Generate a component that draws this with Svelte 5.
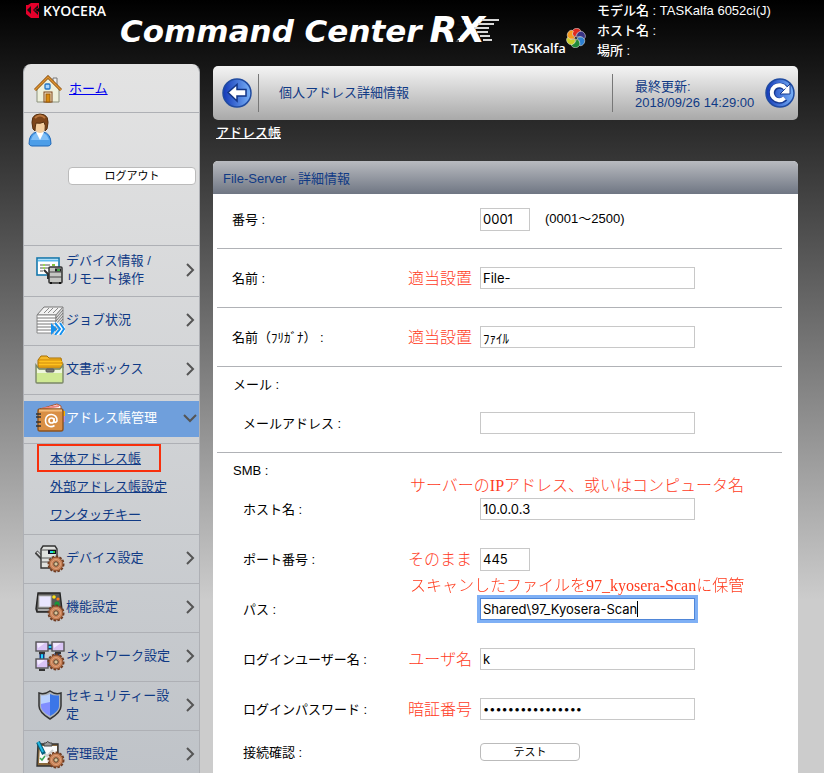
<script>
  import { onMount } from 'svelte';

  const menuTop = [
    { icon: 'status', label: 'デバイス情報 /\nリモート操作' },
    { icon: 'job', label: 'ジョブ状況' },
    { icon: 'box', label: '文書ボックス' },
    { icon: 'book', label: 'アドレス帳管理', active: true }
  ];
  const submenu = ['本体アドレス帳', '外部アドレス帳設定', 'ワンタッチキー'];
  const menuBottom = [
    { icon: 'device', label: 'デバイス設定' },
    { icon: 'panel', label: '機能設定' },
    { icon: 'network', label: 'ネットワーク設定' },
    { icon: 'shield', label: 'セキュリティー設定' },
    { icon: 'admin', label: '管理設定' }
  ];
  const petals = ['#e02a20', '#3a3385', '#2c7fd0', '#1f8a38', '#c9cf2a', '#f69a1e'];
  const streaks = [0, 1, 2, 3, 4, 5];

  let pathInput;
  onMount(() => {
    pathInput.focus();
    pathInput.setSelectionRange(99, 99);
  });
</script>

{#snippet gear()}
  <circle cx="21" cy="21" r="7" fill="none" stroke="#6d3a20" stroke-width="3" stroke-dasharray="2.4 1.2" />
  <circle cx="21" cy="21" r="6.8" fill="#c98258" stroke="#8d5230" />
  <circle cx="21" cy="21" r="4.5" fill="none" stroke="#dda27c" />
  <circle cx="21" cy="21" r="2.2" fill="#d9c59c" stroke="#54402c" />
{/snippet}

{#snippet monitor(x, y)}
  <rect x={x} y={y} width="12" height="9" fill="#d9c4f5" stroke="#555" stroke-width="1.4" />
  <path d="M{x + 1} {y + 1}h8l-7 5z" fill="#f3eaff" />
  <path d="M{x + 3} {y + 11}h6" stroke="#333" stroke-width="2.4" />
{/snippet}

{#snippet icon(name)}
  <svg class="icon" viewBox="0 0 30 30" aria-hidden="true">
    {#if name === 'status'}
      <rect x="2" y="3" width="22" height="17" fill="#fff" stroke="#1478ad" stroke-width="1.6" />
      <path d="M3 5.500h20" stroke="#5dbdf0" stroke-width="2" />
      <path d="M5 10h3m2 0h5m2 0h3M5 13h3m2 0h4M5 16h3" stroke="#555" />
      <path d="M8 10h2m7 0h3M8 13h2" stroke="#79cc1d" stroke-width="1.5" />
      <path d="M9 15l4 4v5" fill="none" stroke="#333" stroke-width="2" />
      <rect x="14" y="12" width="13" height="16" rx="1" fill="#c5c6c2" stroke="#333" stroke-width="1.5" />
      <path d="M14 17h13M14 22h13" stroke="#444" />
      <rect x="20" y="13.500" width="6" height="3" fill="#222" />
      <path d="M22 15h3" stroke="#43d64b" stroke-width="1.5" />
      <path d="M15 28h2m7 0h2" stroke="#111" stroke-width="2" />
    {:else if name === 'job'}
      <path d="M2 10L9 2h19l-7 8z" fill="#f2f2f2" stroke="#777" />
      <path d="M2 10h19v18H2z" fill="#fff" stroke="#888" />
      <path d="M21 10l7-8v19l-7 7z" fill="#ddd" stroke="#888" />
      <path d="M2 13h19l7-8M2 16h19l7-8M2 19h19l7-8M2 22h19l7-8M2 25h19l7-8" fill="none" stroke="#777" />
      <path d="M9 8l5-5m-1 5l5-5m0 5l5-5" stroke="#888" />
      <path d="M20 18l6 6-6 6m4-12l5 6-5 6" fill="none" stroke="#fff" stroke-width="4" />
      <path d="M16 18l6 6-6 6z" fill="#1691ee" />
      <path d="M20 18l5 6-5 6m5-12l4 6-4 6" fill="none" stroke="#1691ee" stroke-width="2" />
    {:else if name === 'box'}
      <path d="M3 14V6l3-4h6l2 2h12l2 10z" fill="#f5b92b" stroke="#a86f00" />
      <path d="M4 6h22M3 9h25M3 12h25" stroke="#c98300" />
      <path d="M5 7.500h22M4 10.500h23" stroke="#ffc21f" stroke-width="1.5" />
      <path d="M1 11v17q0 1 1 1h25q1 0 1-1V11l-3 4H4z" fill="#cfe993" stroke="#7b8768" stroke-width="1.4" />
      <path d="M2 14l2 2h21l2-2v5H2z" fill="#eef6dc" />
      <rect x="11" y="15" width="8" height="3" rx="1" fill="#777" stroke="#555" />
    {:else if name === 'book'}
      <path d="M5 6l17-5 4 2v5z" fill="#fff" stroke="#b0502c" />
      <path d="M6 6l18-3" stroke="#ee867f" stroke-width="2" />
      <path d="M27 8h3v5h-3z" fill="#ffb400" />
      <path d="M27 13h3v6h-3z" fill="#b48be0" />
      <rect x="3" y="6" width="25" height="22" rx="2" fill="#d98f45" stroke="#8f531c" stroke-width="1.4" />
      <path d="M4 7.500h23" stroke="#f4bd7c" stroke-width="2" />
      <path d="M1 11h5M1 14h5M1 19h5M1 23h5" stroke="#333" stroke-width="1.6" />
      <circle cx="16.500" cy="17.500" r="2.500" fill="none" stroke="#fff" stroke-width="1.700" />
      <path d="M19 15v3.500q1 2 3-.5c1-8-11-9-11.500-1-.2 7 6 7.500 9 5.500" fill="none" stroke="#fff" stroke-width="1.600" />
    {:else if name === 'device'}
      <path d="M7 15L1 9" stroke="#444" stroke-width="4" />
      <path d="M7 14L2 9" stroke="#ddd" stroke-width="1.500" />
      <path d="M8 3h12l2 3v19H6V6z" fill="#dfe1df" stroke="#333" stroke-width="1.400" />
      <path d="M6 7h16M6 15h16M6 19h16" stroke="#555" />
      <rect x="13" y="7" width="8" height="4" fill="#112" />
      <path d="M15 9h3" stroke="#22d7e7" stroke-width="2" /><path d="M18 9h2" stroke="#39c939" stroke-width="2" />
      {@render gear()}
    {:else if name === 'panel'}
      <path d="M3 1h22l2 17-3 2H2l-1-3z" fill="#5a5a58" stroke="#252525" stroke-width="1.400" />
      <rect x="4" y="4" width="12" height="11" fill="#e9e6ff" stroke="#bbb" />
      <path d="M3 18h15" stroke="#aaa" stroke-width="2" />
      <circle cx="19" cy="5" r="1.800" fill="#ffe316" /><circle cx="23" cy="7" r="1.600" fill="#ff7a1a" />
      <circle cx="22" cy="12" r="2.500" fill="#15983a" />
      {@render gear()}
    {:else if name === 'network'}
      <path d="M12 6h8M7 12v9m15-9v6M11 23h6" stroke="#123a8a" stroke-width="5" />
      <path d="M12 6h8M7 12v9m15-9v6M11 23h6" stroke="#20d5ff" stroke-width="2" />
      {@render monitor(1, 1)}{@render monitor(17, 1)}{@render monitor(1, 18)}
      {@render gear()}
    {:else if name === 'shield'}
      <path d="M15 1c4 3 8 3 11 2v13c0 6-6 10-11 13C10 26 4 22 4 16V3c3 1 7 1 11-2z" fill="#aeb4ba" stroke="#333" stroke-width="1.500" />
      <path d="M15 4v22C10 23.500 6 20 6 16V5.500q5 .5 9-1.500z" fill="#b8d0ff" />
      <path d="M15 4v22c5-2.500 9-6 9-10V5.500q-5 .5-9-1.500z" fill="#3b76e8" />
      <path d="M6 14v2c0 4 4 7.500 9 10V12z" fill="#5b62ff" opacity=".6" />
    {:else}
      <path d="M3 5h20v22H2z" fill="#8a6a3c" stroke="#333" stroke-width="1.400" />
      <path d="M5 7h17v17H4z" fill="#fafafa" />
      <path d="M9 7V4h2q1-3 4 0h2v3z" fill="#999" stroke="#444" />
      <path d="M9 14l3 3 6-6" fill="none" stroke="#ccc" stroke-width="2" />
      <path d="M5 19l2 2 3-4" fill="none" stroke="#3aa655" stroke-width="1.500" />
      <path d="M3 3l6 12" stroke="#075f7d" stroke-width="4" />
      <path d="M3 3l5 10" stroke="#22b7e0" stroke-width="2" />
      {@render gear()}
    {/if}
  </svg>
{/snippet}

{#snippet item(entry)}
  <li class="item" class:active={entry.active}>
    <a href="#menu">
      {@render icon(entry.icon)}
      <span class="name">{entry.label}</span>
      <svg class="chevron" viewBox="0 0 14 14" aria-hidden="true">
        <path d={entry.active ? 'M1 4l6 6 6-6' : 'M4 1l6 6-6 6'} fill="none" stroke="#555" stroke-width="2" />
      </svg>
    </a>
  </li>
{/snippet}

<div class="page">
  <header>
    <div class="kyocera">
      <svg viewBox="0 0 15 18" aria-hidden="true">
        <path d="M6 2h8v5l-4 2 4 2v6H6l-5-4V4h2z" fill="#e5002b" />
        <path d="M2 9l4-4v8z M13 4v3l-4 2 4 2v3L8 9z" fill="#111" />
      </svg>
      <span>KYOCERA</span>
    </div>
    <div class="title">
      <span>Command Center</span>
      <span class="rx">RX
        <svg viewBox="0 0 70 26" aria-hidden="true">
          {#each streaks as i}
            <path d="M{28 - i} {3 + i * 4}h6" stroke="#111" stroke-width="1.500" />
            <path d="M{i < 3 ? 52 - i * 4 : 38 + i * 3} {2 + i * 4}h{i < 3 ? 17 - i : 14 - i}" stroke="#d8d8d8" stroke-width="2" />
          {/each}
        </svg>
      </span>
    </div>
    <div class="taskalfa">
      <span>TASKalfa</span>
      <svg viewBox="0 0 20 20" aria-hidden="true">
        {#each petals as color, i}
          <path d="M10 9C6 7 6 1 11 .5c4 0 6 3 4 5-2-1-4 0-5 3.500z" fill={color} stroke="#eee" stroke-width=".5" transform="rotate({i * 60 - 10} 10 10)" />
        {/each}
      </svg>
    </div>
    <div class="machine">
      <div>モデル名 : TASKalfa 6052ci(J)</div>
      <div>ホスト名 :</div>
      <div>場所 :</div>
    </div>
  </header>

  <div class="columns">
    <nav>
      <div class="home">
        <svg viewBox="0 0 28 28" aria-hidden="true">
          <path d="M19 3h4v9h-4z" fill="#eee" stroke="#777" />
          <path d="M3 14L14 3l11 11v13H3z" fill="#eef0dc" stroke="#8b917d" />
          <path d="M1 15L14 2l13 13" fill="none" stroke="#8a4d0c" stroke-width="3" />
          <path d="M1 15L14 2l13 13" fill="none" stroke="#dc9432" stroke-width="1.500" />
          <rect x="11" y="9" width="5" height="5" rx="1" fill="#a5d5ff" stroke="#2274c4" stroke-width="1.300" />
          <rect x="10" y="17" width="8" height="10" fill="#f6ead2" stroke="#7b4215" />
          <rect x="12" y="19" width="4" height="8" fill="#d88b12" stroke="#9b5a05" />
        </svg>
        <a href="#home">ホーム</a>
      </div>
      <div class="account">
        <svg viewBox="0 0 24 34" aria-hidden="true">
          <path d="M1 31q0-11 8-12h6q8 1 8 12-1 2-3 2H4q-2 0-3-2z" fill="#4d9ee8" stroke="#2069b8" />
          <path d="M3 27q2-6 6-7h6q4 1 6 7z" fill="#82c0f7" />
          <path d="M8 19h8l-4 8z" fill="#fff" />
          <ellipse cx="12" cy="12" rx="6" ry="8" fill="#f4cfa0" />
          <path d="M5 16Q1 1 12 1q11 0 7 15l-2 2q1-6-1-9-4 2-8 1-1 4-1 8z" fill="#7e461b" stroke="#57300f" />
          <path d="M7 5q5-5 10 0" fill="none" stroke="#b9763e" stroke-width="2" />
        </svg>
        <button type="button">ログアウト</button>
      </div>
      <ul>
        {#each menuTop as entry}{@render item(entry)}{/each}
        <li class="sub">
          {#each submenu as label, i}
            <a href="#address" class:marked={i === 0}>{label}</a>
          {/each}
        </li>
        {#each menuBottom as entry}{@render item(entry)}{/each}
      </ul>
    </nav>

    <main>
      <div class="toolbar">
        <button type="button" class="round" aria-label="戻る">
          <svg viewBox="0 0 30 30" aria-hidden="true">
            <defs>
              <linearGradient id="blue" x2="1"><stop stop-color="#1238b8" /><stop offset="1" stop-color="#79b2f8" /></linearGradient>
            </defs>
            <circle cx="15" cy="15" r="14" fill="url(#blue)" stroke="#204ba0" stroke-width="1.500" />
            <path d="M6 14.500L15 6.500v5h9v6.500h-9v5z" fill="#fff" stroke="#123587" stroke-width="1.500" />
          </svg>
        </button>
        <h1>個人アドレス詳細情報</h1>
        <div class="updated">最終更新:<br />2018/09/26 14:29:00</div>
        <button type="button" class="round" aria-label="更新">
          <svg viewBox="0 0 30 30" aria-hidden="true">
            <circle cx="15" cy="15" r="14" fill="url(#blue)" stroke="#204ba0" stroke-width="1.500" />
            <path d="M20 20.500A7.500 7.500 0 1 1 20 10" fill="none" stroke="#173a91" stroke-width="6" />
            <path d="M25 6v10H15z" fill="#fff" stroke="#173a91" />
            <path d="M19.500 20A7.500 7.500 0 1 1 20.500 10.500" fill="none" stroke="#fff" stroke-width="4" />
          </svg>
        </button>
      </div>
      <a class="crumb" href="#book">アドレス帳</a>

      <section>
        <h2>File-Server - 詳細情報</h2>
        <form>
          <div class="group number">
            <div class="row">
              <div class="caption"><label for="no">番号 :</label></div>
              <input id="no" class="short" value="0001" /><span class="range">(0001～2500)</span>
            </div>
          </div>
          <div class="group single">
            <div class="row">
              <div class="caption"><label for="name">名前 :</label><span class="note">適当設置</span></div>
              <input id="name" value="File-" />
            </div>
          </div>
          <div class="group single">
            <div class="row">
              <div class="caption"><label for="kana">名前（ﾌﾘｶﾞﾅ） :</label><span class="note">適当設置</span></div>
              <input id="kana" value="ﾌｧｲﾙ" />
            </div>
          </div>
          <div class="group nested">
            <h3>メール :</h3>
            <div class="row">
              <div class="caption"><label for="mail">メールアドレス :</label></div>
              <input id="mail" />
            </div>
          </div>
          <div class="group nested last">
            <h3>SMB :</h3>
            <div class="row">
              <div class="caption"><label for="host">ホスト名 :</label></div>
              <input id="host" value="10.0.0.3" />
              <span class="note over">サーバーのIPアドレス、或いはコンピュータ名</span>
            </div>
            <div class="row">
              <div class="caption"><label for="port">ポート番号 :</label><span class="note">そのまま</span></div>
              <input id="port" class="short" value="445" />
            </div>
            <div class="row">
              <div class="caption"><label for="path">パス :</label></div>
              <input id="path" class="focused" value="Shared\97_Kyosera-Scan" bind:this={pathInput} />
              <span class="caret"></span>
              <span class="note over">スキャンしたファイルを97_kyosera-Scanに保管</span>
            </div>
            <div class="row">
              <div class="caption"><label for="user">ログインユーザー名 :</label><span class="note">ユーザ名</span></div>
              <input id="user" value="k" />
            </div>
            <div class="row">
              <div class="caption"><label for="pass">ログインパスワード :</label><span class="note">暗証番号</span></div>
              <input id="pass" type="password" value="0123456789abcdef" />
            </div>
            <div class="row check">
              <div class="caption"><label for="test">接続確認 :</label></div>
              <button id="test" type="button">テスト</button>
            </div>
          </div>
        </form>
      </section>
    </main>
  </div>
</div>

<style>
  :global(body) {
    margin: 0;
  }
  .page {
    height: 100vh;
    display: flex;
    flex-direction: column;
    overflow: hidden;
    box-sizing: border-box;
    background: linear-gradient(#000, #ccc 600px);
    font: 13px/18px "Liberation Sans", "Noto Sans CJK JP", sans-serif;
    color: #000;
  }
  h1, h2, h3, ul {
    margin: 0;
    padding: 0;
    font-size: 13px;
    font-weight: normal;
    list-style: none;
  }
  svg {
    display: block;
    flex: none;
  }
  button {
    box-sizing: border-box;
    padding: 0;
    border: 1px solid #bbb;
    border-radius: 4px;
    background: #fff;
    color: #000;
    font: 11px/16px "Liberation Sans", "Noto Sans CJK JP", sans-serif;
  }

  header {
    display: flex;
    height: 64px;
    flex: none;
    padding-left: 25px;
    color: #fff;
  }
  .kyocera {
    display: flex;
    gap: 3px;
    width: 95px;
    margin-top: 1px;
    font: 600 14px/20px "Open Sans", sans-serif;
  }
  .kyocera svg {
    width: 15px;
    height: 18px;
  }
  .title {
    display: flex;
    align-items: baseline;
    gap: 8px;
    width: 391px;
    margin-top: 9px;
    font: italic bold 31px/42px "DejaVu Sans", sans-serif;
    white-space: nowrap;
  }
  .rx {
    position: relative;
    font-size: 36px;
  }
  .rx svg {
    position: absolute;
    left: 0;
    top: 9px;
    width: 70px;
    height: 26px;
  }
  .taskalfa {
    display: flex;
    width: 86px;
    padding-top: 28px;
    font: 600 13px/40px "Open Sans", sans-serif;
  }
  .taskalfa svg {
    width: 20px;
    height: 20px;
  }
  .machine {
    padding-top: 1px;
    line-height: 20px;
    font-weight: 500;
    white-space: nowrap;
  }

  .columns {
    display: flex;
    flex: 1;
    min-height: 0;
    gap: 13px;
    padding: 0 26px 0 23px;
  }
  nav {
    box-sizing: border-box;
    flex: none;
    width: 177px;
    overflow: hidden;
    border: 1px solid #aeb0b5;
    border-top-color: #e3e3e3;
    border-bottom: 0;
    border-radius: 8px 8px 0 0;
    background: linear-gradient(#e3e3e3, #bfc3c8);
  }
  nav a {
    color: #103a85;
  }
  .home {
    display: flex;
    align-items: center;
    gap: 7px;
    height: 47px;
    padding-left: 10px;
    border-bottom: 1px solid #aeb0b5;
  }
  .home svg {
    width: 28px;
    height: 28px;
  }
  .home a {
    color: #00e;
  }
  .account {
    height: 132px;
    border-bottom: 1px solid #aeb0b5;
    padding-left: 4px;
  }
  .account svg {
    width: 24px;
    height: 34px;
  }
  .account button {
    display: block;
    width: 128px;
    height: 18px;
    margin: 20px 0 0 40px;
  }
  .item {
    box-sizing: border-box;
    height: 49px;
    padding-bottom: 3px;
    border-bottom: 1px solid #aeb0b5;
  }
  .item:first-child {
    height: 51px;
  }
  .item a {
    box-sizing: border-box;
    display: flex;
    align-items: center;
    height: 100%;
    padding: 0 2px 0 11px;
    text-decoration: none;
  }
  .item.active {
    padding: 6px 0;
  }
  .item.active a {
    padding-bottom: 3px;
    background: #6f9fdc;
    color: #fff;
  }
  .icon {
    width: 30px;
    height: 30px;
  }
  .name {
    flex: 1;
    padding: 0 8px 0 1px;
    white-space: pre-line;
  }
  .chevron {
    width: 14px;
    height: 14px;
  }
  .sub {
    display: flex;
    flex-direction: column;
    align-items: flex-start;
    padding: 0 0 6px 13px;
    border-bottom: 1px solid #aeb0b5;
  }
  .sub a {
    box-sizing: border-box;
    height: 28px;
    padding: 0 13px;
    line-height: 30px;
  }
  .sub .marked {
    padding: 0 18px 0 11px;
    border: 2px solid #f82f0c;
    line-height: 26px;
  }

  main {
    display: flex;
    flex-direction: column;
    flex: 1;
    min-width: 0;
    padding-top: 2px;
  }
  .toolbar {
    display: flex;
    align-items: center;
    flex: none;
    height: 54px;
    padding: 0 3px 0 9px;
    border-radius: 5px;
    background: linear-gradient(#f4f4f4, #a9a9a9);
    color: #103a85;
  }
  .round {
    width: 30px;
    height: 30px;
    border: 0;
    background: none;
  }
  .toolbar h1 {
    flex: 1;
    margin-left: 6px;
    padding-left: 20px;
    border-left: 1px solid #777;
    line-height: 38px;
  }
  .updated {
    width: 130px;
    padding: 5px 0 1px 22px;
    border-left: 1px solid #777;
    line-height: 16px;
  }
  .crumb {
    align-self: flex-start;
    margin: 4px 0 19px 3px;
    color: #fff;
    font-weight: 500;
  }
  section {
    flex: 1;
    background: #fff;
    border-radius: 5px 5px 0 0;
  }
  h2 {
    height: 33px;
    padding-left: 10px;
    border-radius: 5px 5px 0 0;
    background: linear-gradient(#b9bbc0, #6f7683);
    color: #103a85;
    line-height: 35px;
  }
  form {
    padding: 0 16px 0 4px;
  }
  .group {
    border-bottom: 1px solid #b0b2b6;
  }
  .last {
    border: 0;
  }
  .row {
    position: relative;
    display: flex;
    align-items: center;
    height: 50px;
  }
  .number {
    padding-bottom: 4px;
  }
  .single {
    padding: 4px 0;
  }
  .nested {
    padding-bottom: 4px;
  }
  .caption {
    box-sizing: border-box;
    display: flex;
    align-items: center;
    justify-content: space-between;
    flex: none;
    width: 263px;
    padding: 2px 8px 0 15px;
  }
  .nested .caption {
    padding-left: 26px;
  }
  h3 {
    padding: 4px 0 0 16px;
    line-height: 27px;
  }
  input {
    box-sizing: border-box;
    width: 215px;
    height: 22px;
    padding: 0 2px;
    border: 1px solid #c8c8c8;
    border-radius: 0;
    outline: none;
    background: #fff;
    color: #000;
    caret-color: transparent;
    font: 13px/18px Inter, "Noto Sans CJK JP", sans-serif;
  }
  input[type="password"] {
    font-size: 11px;
  }
  input.short {
    width: 50px;
    height: 23px;
  }
  input.focused {
    border-color: #4f86d8;
    box-shadow: 0 0 0 3px #7fb0f5;
  }
  .caret {
    position: absolute;
    left: 420px;
    top: 17px;
    width: 1px;
    height: 16px;
    background: #000;
  }
  .range {
    margin-left: 15px;
  }
  .note {
    color: #ff3b1d;
    font: 300 16px/20px "Liberation Serif", "Noto Sans CJK JP", serif;
    white-space: nowrap;
  }
  .over {
    position: absolute;
    left: 193px;
    top: -8px;
  }
  .check {
    height: 36px;
  }
  .check button {
    width: 100px;
    height: 18px;
  }
</style>
